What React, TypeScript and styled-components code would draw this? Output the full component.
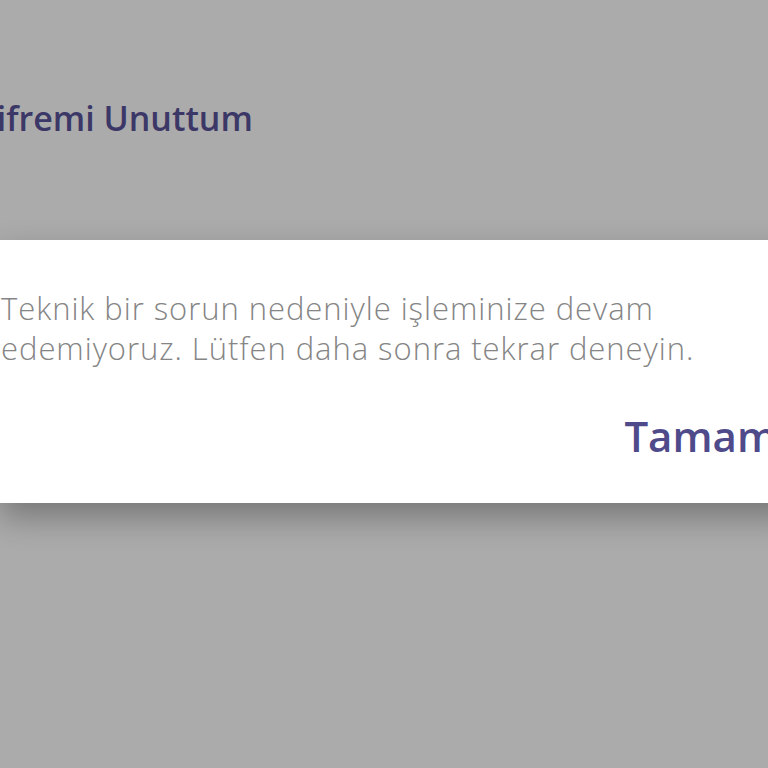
import { createGlobalStyle, styled } from "styled-components";

const GlobalStyle = createGlobalStyle`
  html, body {
    margin: 0;
    padding: 0;
    background: #ababab;
    overflow: hidden;
  }
  body {
    font-family: "Open Sans", "Noto Sans", sans-serif;
  }
`;

const Screen = styled.div`
  width: 768px;
  height: 768px;
  overflow: hidden;
  display: flex;
  flex-flow: column;
`;

const Header = styled.div`
  height: 240px;
  box-sizing: border-box;
  padding-top: 94px;
`;

const Title = styled.h1`
  margin: 0 0 0 -22px;
  font: 600 34px/48px "Open Sans", sans-serif;
  color: #3b3767;
  white-space: nowrap;
`;

const Dialog = styled.div`
  width: 800px;
  height: 263px;
  box-sizing: border-box;
  background: #ffffff;
  box-shadow: 0 14px 30px rgba(0, 0, 0, 0.3);
  padding-top: 48px;
  display: flex;
  flex-flow: column;
`;

const Message = styled.p`
  margin: 0;
  padding-left: 1px;
  font: 300 31px/40px "Open Sans", sans-serif;
  letter-spacing: 0.95px;
  color: #858585;
  width: 740px;
`;

const Actions = styled.div`
  display: flex;
  justify-content: flex-end;
  padding-top: 42px;
`;

const Button = styled.button`
  border: none;
  background: none;
  padding: 0;
  margin-right: 23px;
  font: 600 42px/52px "Open Sans", sans-serif;
  color: #4f4a8a;
`;

export default function App() {
  return (
    <Screen>
      <GlobalStyle />
      <Header>
        <Title>Şifremi Unuttum</Title>
      </Header>
      <Dialog>
        <Message>
          Teknik bir sorun nedeniyle işleminize devam edemiyoruz. Lütfen daha sonra tekrar deneyin.
        </Message>
        <Actions>
          <Button type="button">Tamam</Button>
        </Actions>
      </Dialog>
    </Screen>
  );
}
